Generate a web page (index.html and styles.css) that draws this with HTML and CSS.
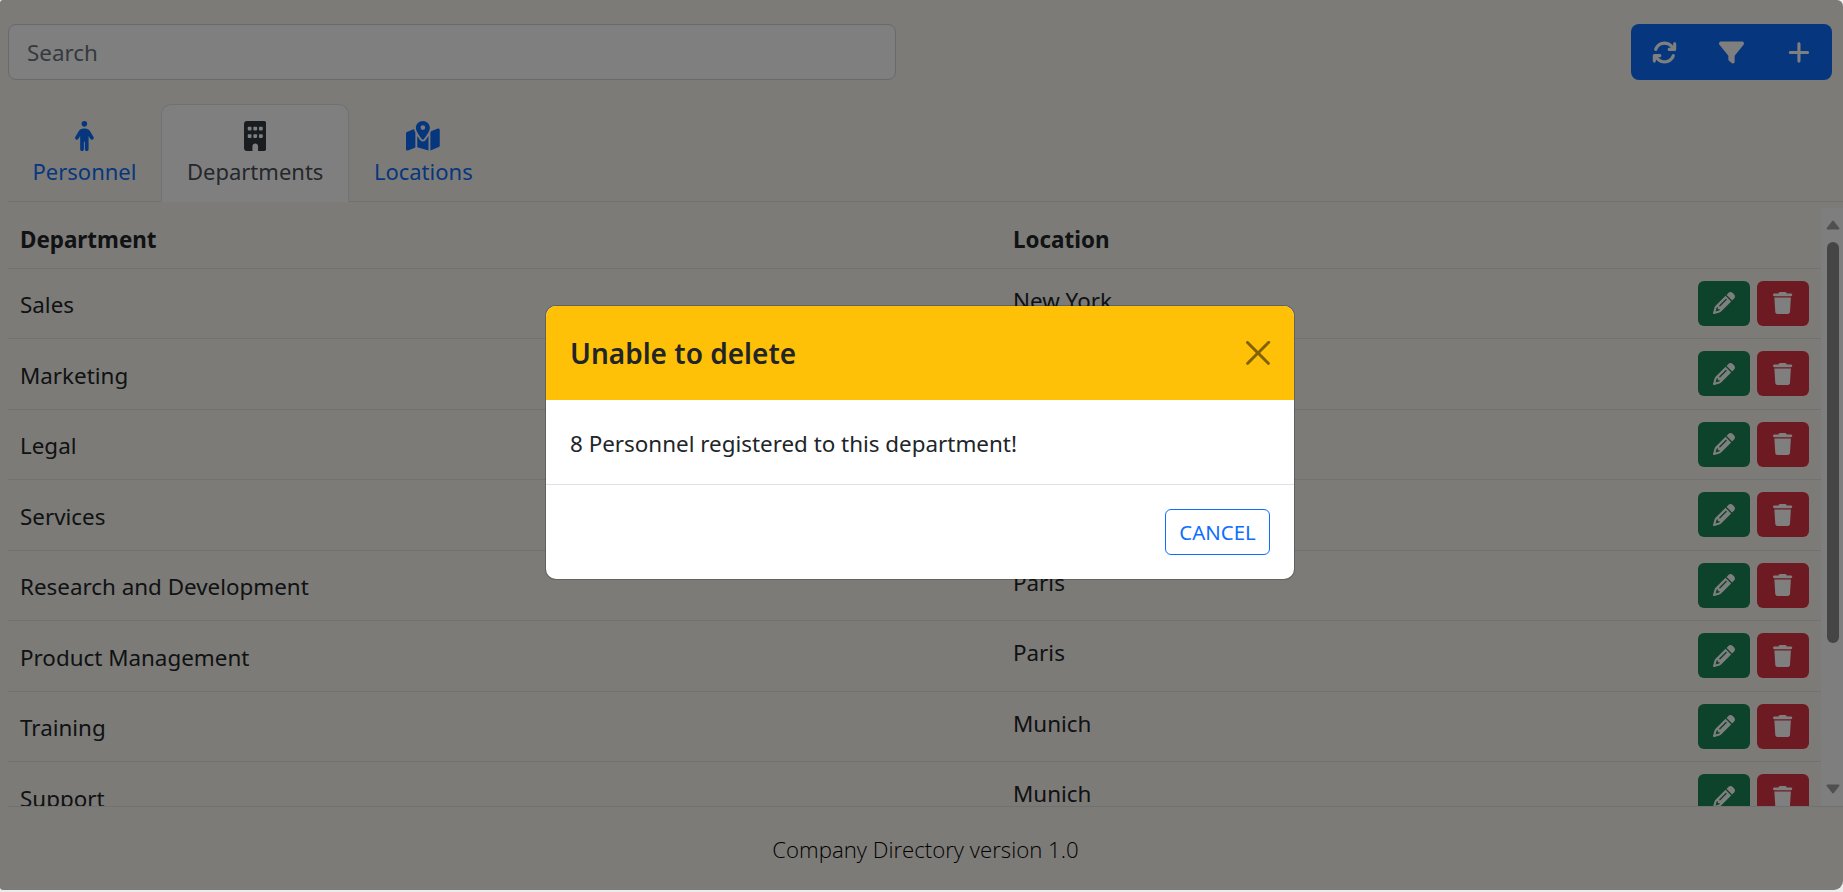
FILE: index.html
```html
<!DOCTYPE html>
<html lang="en">
<head>
  <meta charset="UTF-8">
  <meta name="viewport" content="width=device-width, initial-scale=1.0">
  <title>Company Directory</title>
  <link rel="stylesheet" href="styles.css">
</head>
<body>
  <div class="page">
    <div class="toolbar">
      <input class="search" type="text" placeholder="Search">
      <div class="btn-group">
        <button class="tool-btn">
          <svg class="tool-icon" viewBox="0 0 512 512"><path d="M105.1 202.6c7.7-21.8 20.2-42.3 37.8-59.8c62.5-62.5 163.8-62.5 226.3 0L386.3 160H352c-17.7 0-32 14.3-32 32s14.3 32 32 32H463.5c0 0 0 0 0 0h.4c17.7 0 32-14.3 32-32V80c0-17.7-14.3-32-32-32s-32 14.3-32 32v35.2L414.4 97.6c-87.5-87.5-229.3-87.5-316.8 0C73.2 122 55.6 150.7 44.8 181.4c-5.9 16.7 2.9 34.9 19.5 40.8s34.9-2.9 40.8-19.5zM39 289.3c-5 1.5-9.8 4.2-13.7 8.2c-4 4-6.7 8.8-8.1 14c-.3 1.2-.6 2.5-.8 3.8c-.3 1.7-.4 3.4-.4 5.1V432c0 17.7 14.3 32 32 32s32-14.3 32-32V396.9l17.6 17.5 0 0c87.5 87.4 229.3 87.4 316.7 0c24.4-24.4 42.1-53.1 52.9-83.7c5.9-16.7-2.9-34.9-19.5-40.8s-34.9 2.9-40.8 19.5c-7.7 21.8-20.2 42.3-37.8 59.8c-62.5 62.5-163.8 62.5-226.3 0l-.1-.1L125.6 352H160c17.7 0 32-14.3 32-32s-14.3-32-32-32H48.4c-1.6 0-3.2 .1-4.8 .3s-3.1 .5-4.6 1z"/></svg>
        </button>
        <button class="tool-btn">
          <svg class="tool-icon" viewBox="0 0 512 512"><path d="M3.9 54.9C10.5 40.9 24.5 32 40 32H472c15.5 0 29.5 8.9 36.1 22.9s4.6 30.5-5.2 42.5L320 320.9V448c0 12.1-6.8 23.2-17.7 28.6s-23.9 4.3-33.5-3l-64-48c-8.1-6-12.8-15.5-12.8-25.6V320.9L9 97.3C-.7 85.4-2.8 68.8 3.9 54.9z"/></svg>
        </button>
        <button class="tool-btn">
          <svg class="tool-icon" viewBox="0 0 448 512"><path d="M256 80c0-17.7-14.3-32-32-32s-32 14.3-32 32V224H48c-17.7 0-32 14.3-32 32s14.3 32 32 32H192V432c0 17.7 14.3 32 32 32s32-14.3 32-32V288H400c17.7 0 32-14.3 32-32s-14.3-32-32-32H256V80z"/></svg>
        </button>
      </div>
    </div>

    <div class="tabs">
      <a class="tab">
        <svg class="tab-icon" viewBox="0 0 320 512"><path d="M112 48a48 48 0 1 1 96 0 48 48 0 1 1 -96 0zm40 304V480c0 17.7-14.3 32-32 32s-32-14.3-32-32V256.9L59.4 304.5c-9.1 15.1-28.8 20-43.9 10.9s-20-28.8-10.9-43.9l58.3-97c17.4-28.9 48.6-46.6 82.3-46.6h29.7c33.7 0 64.9 17.7 82.3 46.6l58.3 97c9.1 15.1 4.2 34.8-10.9 43.9s-34.8 4.2-43.9-10.9L232 256.9V480c0 17.7-14.3 32-32 32s-32-14.3-32-32V352H152z"/></svg>
        <span>Personnel</span>
      </a>
      <a class="tab active">
        <svg class="tab-icon" viewBox="0 0 384 512"><path d="M48 0C21.5 0 0 21.5 0 48V464c0 26.5 21.5 48 48 48h96V432c0-26.5 21.5-48 48-48s48 21.5 48 48v80h96c26.5 0 48-21.5 48-48V48c0-26.5-21.5-48-48-48H48zM64 240c0-8.8 7.2-16 16-16h32c8.8 0 16 7.2 16 16v32c0 8.8-7.2 16-16 16H80c-8.8 0-16-7.2-16-16V240zm112-16h32c8.8 0 16 7.2 16 16v32c0 8.8-7.2 16-16 16H176c-8.8 0-16-7.2-16-16V240c0-8.8 7.2-16 16-16zm80 16c0-8.8 7.2-16 16-16h32c8.8 0 16 7.2 16 16v32c0 8.8-7.2 16-16 16H272c-8.8 0-16-7.2-16-16V240zM80 96h32c8.8 0 16 7.2 16 16v32c0 8.8-7.2 16-16 16H80c-8.8 0-16-7.2-16-16V112c0-8.8 7.2-16 16-16zm80 16c0-8.8 7.2-16 16-16h32c8.8 0 16 7.2 16 16v32c0 8.8-7.2 16-16 16H176c-8.8 0-16-7.2-16-16V112zM272 96h32c8.8 0 16 7.2 16 16v32c0 8.8-7.2 16-16 16H272c-8.8 0-16-7.2-16-16V112c0-8.8 7.2-16 16-16z"/></svg>
        <span>Departments</span>
      </a>
      <a class="tab">
        <svg class="tab-icon" viewBox="0 0 576 512"><path d="M408 120c0 54.6-73.1 151.9-105.2 192c-7.7 9.6-22 9.6-29.6 0C241.1 271.9 168 174.6 168 120C168 53.7 221.7 0 288 0s120 53.7 120 120zm8 80.4c3.5-6.9 6.7-13.8 9.6-20.6c.5-1.2 1-2.5 1.5-3.7l116-46.4C558.9 123.4 576 135 576 152V422.8c0 9.8-6 18.6-15.1 22.3L416 503V200.4zM137.6 138.3c2.4 14.1 7.2 28.3 12.8 41.5c2.9 6.8 6.1 13.7 9.6 20.6V451.8L32.9 502.7C17.1 509 0 497.4 0 480.4V209.6c0-9.8 6-18.6 15.1-22.3l122.6-49zM327.8 332c13.9-17.4 35.7-45.7 56.2-77V504.3L192 449.4V255c20.5 31.3 42.3 59.6 56.2 77c20.5 25.6 59.1 25.6 79.6 0zM288 152a40 40 0 1 0 0-80 40 40 0 1 0 0 80z"/></svg>
        <span>Locations</span>
      </a>
    </div>

    <div class="content">
      <div class="table">
        <div class="row head">
          <div>Department</div>
          <div>Location</div>
          <div></div>
        </div>
        <div class="row"><div>Sales</div><div class="loc">New York</div><div class="actions"><button class="act edit"><svg class="pencil" viewBox="0 0 512 512"><use href="#pencil"/></svg></button><button class="act del"><svg class="trash" viewBox="0 0 448 512"><use href="#trash"/></svg></button></div></div>
        <div class="row"><div>Marketing</div><div class="loc">New York</div><div class="actions"><button class="act edit"><svg class="pencil" viewBox="0 0 512 512"><use href="#pencil"/></svg></button><button class="act del"><svg class="trash" viewBox="0 0 448 512"><use href="#trash"/></svg></button></div></div>
        <div class="row"><div>Legal</div><div class="loc">London</div><div class="actions"><button class="act edit"><svg class="pencil" viewBox="0 0 512 512"><use href="#pencil"/></svg></button><button class="act del"><svg class="trash" viewBox="0 0 448 512"><use href="#trash"/></svg></button></div></div>
        <div class="row"><div>Services</div><div class="loc">London</div><div class="actions"><button class="act edit"><svg class="pencil" viewBox="0 0 512 512"><use href="#pencil"/></svg></button><button class="act del"><svg class="trash" viewBox="0 0 448 512"><use href="#trash"/></svg></button></div></div>
        <div class="row"><div>Research and Development</div><div class="loc">Paris</div><div class="actions"><button class="act edit"><svg class="pencil" viewBox="0 0 512 512"><use href="#pencil"/></svg></button><button class="act del"><svg class="trash" viewBox="0 0 448 512"><use href="#trash"/></svg></button></div></div>
        <div class="row"><div>Product Management</div><div class="loc">Paris</div><div class="actions"><button class="act edit"><svg class="pencil" viewBox="0 0 512 512"><use href="#pencil"/></svg></button><button class="act del"><svg class="trash" viewBox="0 0 448 512"><use href="#trash"/></svg></button></div></div>
        <div class="row"><div>Training</div><div class="loc">Munich</div><div class="actions"><button class="act edit"><svg class="pencil" viewBox="0 0 512 512"><use href="#pencil"/></svg></button><button class="act del"><svg class="trash" viewBox="0 0 448 512"><use href="#trash"/></svg></button></div></div>
        <div class="row"><div>Support</div><div class="loc">Munich</div><div class="actions"><button class="act edit"><svg class="pencil" viewBox="0 0 512 512"><use href="#pencil"/></svg></button><button class="act del"><svg class="trash" viewBox="0 0 448 512"><use href="#trash"/></svg></button></div></div>
      </div>
      <div class="scrollbar">
        <svg class="arrow up" viewBox="0 0 14 10"><path d="M7 1.5L12.5 8.5H1.5z"/></svg>
        <span class="thumb"></span>
        <svg class="arrow down" viewBox="0 0 14 10"><path d="M1.5 1.5H12.5L7 8.5z"/></svg>
      </div>
    </div>

    <div class="footer">Company Directory version 1.0</div>

    <div class="backdrop">
      <div class="modal">
        <div class="modal-header">
          <h5 class="modal-title">Unable to delete</h5>
          <svg class="close" viewBox="0 0 16 16"><path d="M.3.3a1 1 0 0 1 1.4 0L8 6.6 14.3.3a1 1 0 1 1 1.4 1.4L9.4 8l6.3 6.3a1 1 0 0 1-1.4 1.4L8 9.4l-6.3 6.3a1 1 0 0 1-1.4-1.4L6.6 8 .3 1.7A1 1 0 0 1 .3.3z"/></svg>
        </div>
        <div class="modal-body">8 Personnel registered to this department!</div>
        <div class="modal-footer">
          <button class="cancel">CANCEL</button>
        </div>
      </div>
    </div>
  </div>

  <svg class="defs" width="0" height="0">
    <defs>
      <path id="pencil" d="M410.3 231l11.3-11.3-33.9-33.9-62.1-62.1L291.7 89.8l-11.3 11.3-22.6 22.6L58.6 322.9c-10.4 10.4-18 23.3-22.2 37.4L1 480.7c-2.5 8.4-.2 17.5 6.1 23.7s15.3 8.5 23.7 6.1l120.3-35.4c14.1-4.2 27-11.8 37.4-22.2L387.7 253.7 410.3 231zM160 399.4l-9.1 22.7c-4 3.1-8.5 5.4-13.3 6.9L59.4 452l23-78.1c1.4-4.9 3.8-9.4 6.9-13.3l22.7-9.1v32c0 8.8 7.2 16 16 16h32zM362.7 18.7L348.3 33.2 325.7 55.8 314.3 67.1l33.9 33.9 62.1 62.1 33.9 33.9 11.3-11.3 22.6-22.6 14.5-14.5c25-25 25-65.5 0-90.5L453.3 18.7c-25-25-65.5-25-90.5 0zm-47.4 168l-144 144c-6.2 6.2-16.4 6.2-22.6 0s-6.2-16.4 0-22.6l144-144c6.2-6.2 16.4-6.2 22.6 0s6.2 16.4 0 22.6z"/>
      <path id="trash" d="M135.2 17.7L128 32H32C14.3 32 0 46.3 0 64S14.3 96 32 96H416c17.7 0 32-14.3 32-32s-14.3-32-32-32H320l-7.2-14.3C307.4 6.8 296.3 0 284.2 0H163.8c-12.1 0-23.2 6.8-28.6 17.7zM416 128H32L53.2 467c1.6 25.3 22.6 45 47.9 45H346.9c25.3 0 46.3-19.7 47.9-45L416 128z"/>
    </defs>
  </svg>
</body>
</html>
```
FILE: styles.css
```css
* {
  box-sizing: border-box;
}
html, body {
  height: 100%;
}
body {
  margin: 0;
  background-color: #ececec;
  color: #212529;
  font-family: "Noto Sans", "Open Sans", Arial, sans-serif;
  font-size: 22.4px;
  overflow: hidden;
}
.defs {
  position: absolute;
}
.page {
  position: relative;
  height: 890px;
  padding-left: 8px;
  display: flex;
  flex-direction: column;
  background-color: #f9f7ef;
  border-radius: 3px 6px 9px 3px;
  overflow: hidden;
}

/* top bar */
.toolbar {
  display: flex;
  justify-content: space-between;
  padding: 24px 11px 0 0;
}
.search {
  width: 888px;
  height: 56px;
  padding: 1px 18px 0;
  border: 1px solid #ced4da;
  border-radius: 8px;
  background-color: #fff;
  font: inherit;
  color: #212529;
}
.search::placeholder {
  color: #6c757d;
}
.btn-group {
  width: 201px;
  height: 56px;
  display: flex;
  border-radius: 8px;
  background-color: #0d6efd;
}
.tool-btn {
  flex: 1;
  padding: 0;
  border: 0;
  background: none;
  display: flex;
  align-items: center;
  justify-content: center;
}
.tool-icon {
  height: 25px;
  fill: #fff;
}

/* tabs */
.tabs {
  display: flex;
  margin-top: 24px;
  height: 98px;
  border-bottom: 1px solid #dee2e6;
  font-size: 22px;
}
.tab {
  display: flex;
  flex-direction: column;
  align-items: center;
  padding: 16px 23.5px 0;
  border: 1px solid transparent;
  border-radius: 10px 10px 0 0;
  color: #0d6efd;
}
.tab.active {
  height: 98px;
  padding: 16px 25px 0;
  color: #495057;
  background-color: #fff;
  border-color: #dee2e6 #dee2e6 #fff;
}
.tab-icon {
  height: 30px;
  fill: currentColor;
  margin-bottom: 5px;
}
.tab.active .tab-icon {
  fill: #343a40;
}

/* table */
.content {
  flex: 1;
  min-height: 0;
  display: flex;
}
.table {
  flex: 1;
  overflow: hidden;
}
.row {
  display: grid;
  grid-template-columns: 993px 1fr auto;
  align-items: center;
  height: 70.5px;
  padding: 0 12px 0 12px;
  border-bottom: 1px solid #dee2e6;
}
.row > div:first-child {
  padding-top: 3px;
}
.row.head {
  height: 66.5px;
  padding-top: 9px;
  font-weight: 700;
  color: #212529;
}
.row.head > div:first-child {
  padding-top: 0;
}
.loc {
  padding-bottom: 6px;
}
.actions {
  display: flex;
  gap: 7px;
}
.act {
  width: 52px;
  height: 45px;
  padding: 0;
  border: 0;
  border-radius: 6px;
  display: flex;
  align-items: center;
  justify-content: center;
}
.act svg {
  fill: #fff;
}
.edit {
  background-color: #198754;
}
.del {
  background-color: #dc3545;
}
.pencil {
  height: 22px;
}
.trash {
  height: 22px;
}

/* hand drawn scrollbar */
.scrollbar {
  width: 22px;
  margin-top: 6px;
  padding-left: 4.5px;
  display: flex;
  flex-direction: column;
  background-color: #fdfdfd;
}
.arrow {
  width: 14px;
  height: 10px;
  flex: none;
  fill: #a0a0a0;
  stroke: #a0a0a0;
  stroke-width: 2;
  stroke-linejoin: round;
}
.arrow.up {
  margin-top: 12px;
}
.arrow.down {
  margin-top: 141px;
}
.thumb {
  width: 12px;
  height: 401px;
  margin: 12px 0 0 1px;
  border-radius: 6px;
  background-color: #8a8a8a;
}

.footer {
  height: 84px;
  padding-top: 2px;
  border-top: 1px solid #dee2e6;
  display: flex;
  align-items: center;
  justify-content: center;
  font-family: "Open Sans", "Noto Sans", Arial, sans-serif;
  font-weight: 300;
  font-size: 22.2px;
  color: #000;
}

/* modal */
.backdrop {
  position: absolute;
  inset: 0;
  padding: 306px 3px 0 0;
  display: flex;
  justify-content: center;
  align-items: flex-start;
  background-color: rgba(0, 0, 0, .5);
}
.modal {
  width: 748px;
  height: 273px;
  background-color: #fff;
  border-radius: 10px;
  box-shadow: 0 0 0 1px rgba(0, 0, 0, .2);
  overflow: hidden;
  display: flex;
  flex-direction: column;
}
.modal-header {
  height: 94px;
  padding: 0 23px 0 24px;
  background-color: #ffc107;
  display: flex;
  align-items: center;
  justify-content: space-between;
}
.modal-title {
  margin: 0;
  font-size: 28px;
  font-weight: 600;
}
.close {
  width: 26px;
  height: 24px;
  fill: #806104;
}
.modal-body {
  height: 85px;
  padding: 3px 24px 0;
  display: flex;
  align-items: center;
  border-bottom: 1px solid #dee2e6;
}
.modal-footer {
  flex: 1;
  padding: 0 24px;
  display: flex;
  align-items: center;
  justify-content: flex-end;
}
.cancel {
  width: 105px;
  height: 46px;
  padding: 0;
  border: 1px solid #0d6efd;
  border-radius: 6px;
  background: #fff;
  color: #0d6efd;
  font: inherit;
  font-size: 20.4px;
}
```
